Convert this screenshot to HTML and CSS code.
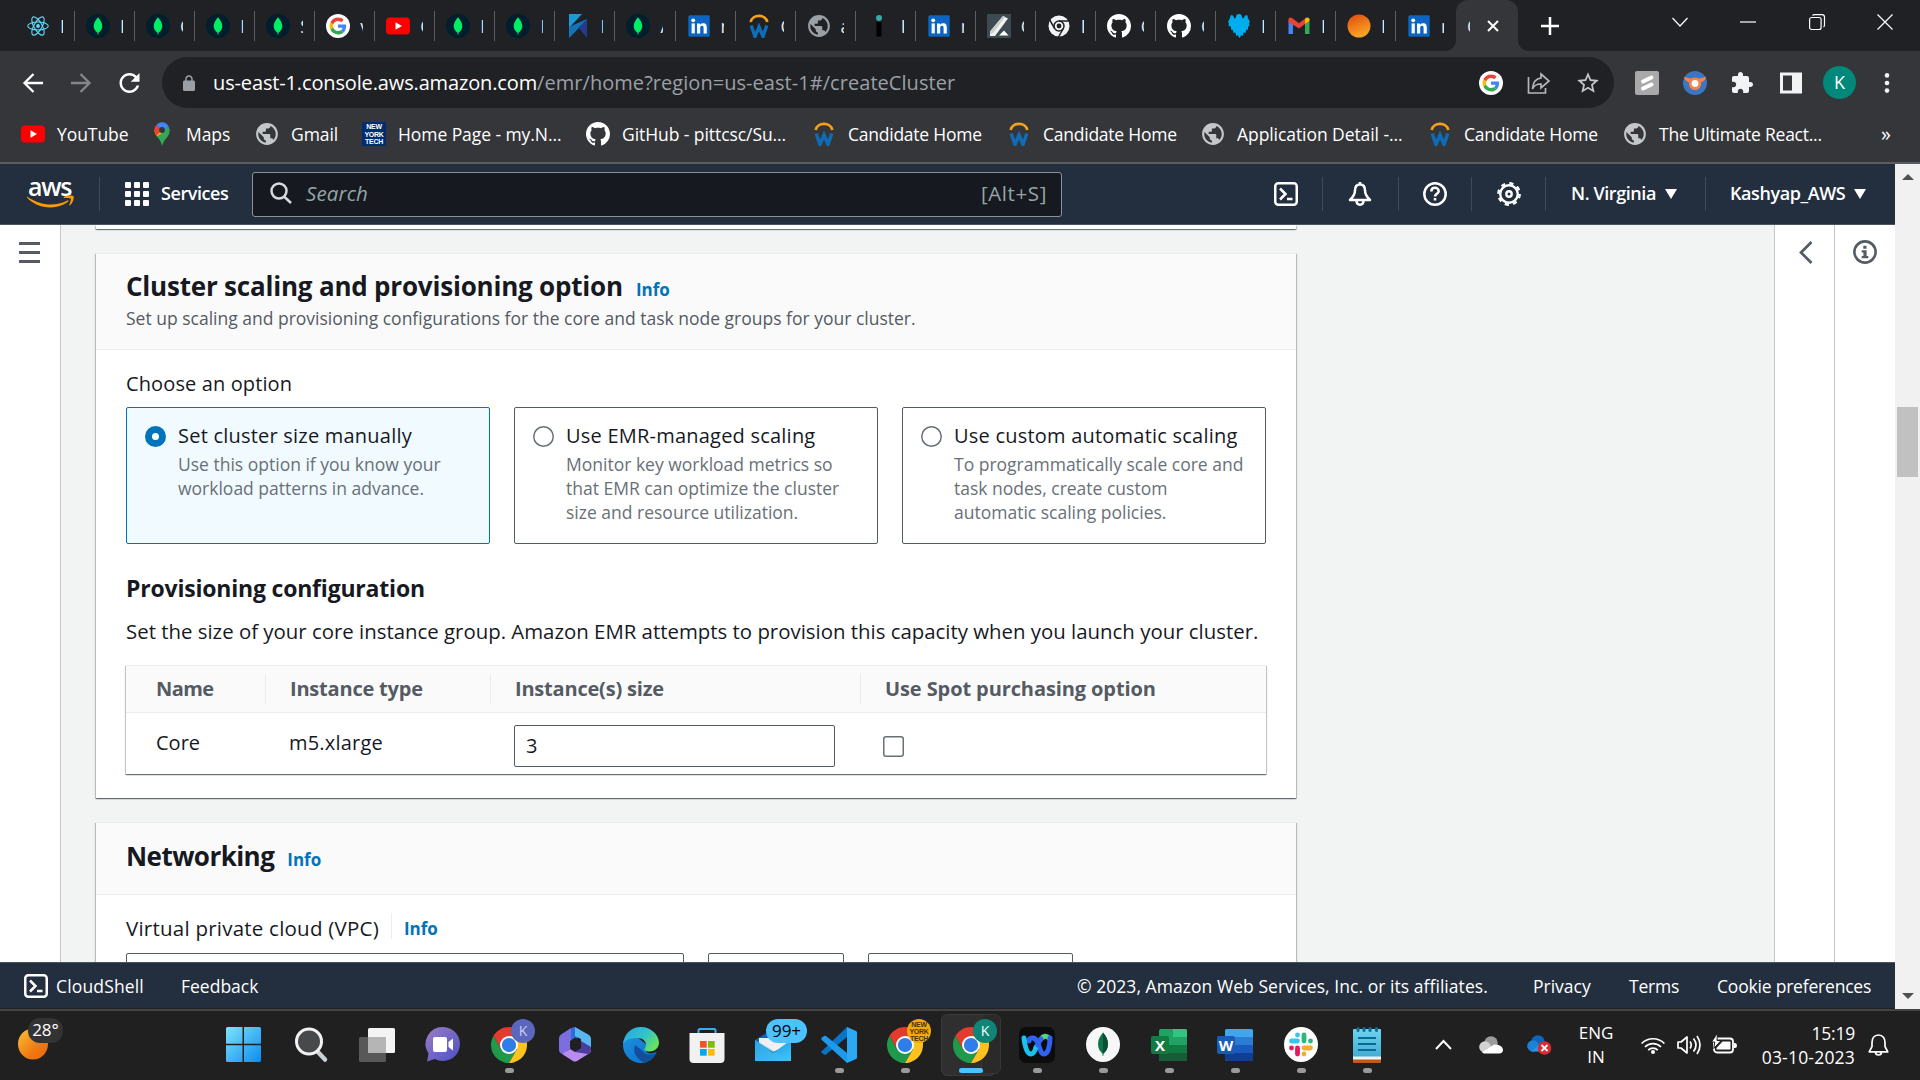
FILE: index.html
```html
<!DOCTYPE html>
<html lang="en">
<head>
<meta charset="utf-8">
<title>Create cluster</title>
<link rel="stylesheet" href="styles.css">
</head>
<body>
<svg class="defs" width="0" height="0">
  <defs>
    <linearGradient id="gSun" x1="0" y1="0" x2="1" y2="1"><stop offset="0" stop-color="#f6c33a"/><stop offset=".6" stop-color="#f27a12"/><stop offset="1" stop-color="#e9660a"/></linearGradient>
    <linearGradient id="gOrange" x1="0" y1="0" x2=".4" y2="1"><stop offset="0" stop-color="#e0480c"/><stop offset="1" stop-color="#f9a426"/></linearGradient>
    <linearGradient id="gWin" x1="0" y1="0" x2="1" y2="1"><stop offset="0" stop-color="#7fe3fb"/><stop offset="1" stop-color="#0a8cf0"/></linearGradient>
    <linearGradient id="gChat" x1="0" y1="0" x2="1" y2="1"><stop offset="0" stop-color="#9a7fc0"/><stop offset="1" stop-color="#4b4fc8"/></linearGradient>
    <linearGradient id="gEdge" x1="0" y1="0" x2="1" y2=".6"><stop offset="0" stop-color="#2ba3e8"/><stop offset=".6" stop-color="#33c3c9"/><stop offset="1" stop-color="#67e35b"/></linearGradient>
    <linearGradient id="gEdge2" x1="0" y1="0" x2="1" y2="1"><stop offset="0" stop-color="#1b8fe0"/><stop offset="1" stop-color="#0c70c8"/></linearGradient>
    <linearGradient id="gMail" x1="0" y1="0" x2="1" y2="1"><stop offset="0" stop-color="#1b8be0"/><stop offset="1" stop-color="#3fc8fa"/></linearGradient>
    <linearGradient id="gNote" x1="0" y1="0" x2="0" y2="1"><stop offset="0" stop-color="#6fd3f0"/><stop offset="1" stop-color="#3ba6cc"/></linearGradient>
    <symbol id="mongo" viewBox="0 0 24 24"><circle cx="12" cy="12" r="12" fill="#001e2b"/><path fill="#00ed64" d="M12 3.200c2.600 3 4.300 5.800 4.300 9 0 3-1.700 5-3.800 6.600l-.2 1.900h-.6l-.2-1.900c-2.100-1.600-3.800-3.600-3.800-6.600 0-3.200 1.700-6 4.300-9z"/></symbol>
    <symbol id="google" viewBox="-10 -10 68 68"><circle cx="24" cy="24" r="34" fill="#fff"/><path fill="#EA4335" d="M24 9.500c3.540 0 6.710 1.220 9.210 3.600l6.850-6.850C35.900 2.380 30.470 0 24 0 14.620 0 6.510 5.380 2.560 13.220l7.980 6.190C12.430 13.720 17.740 9.500 24 9.500z"/><path fill="#4285F4" d="M46.980 24.550c0-1.570-.15-3.090-.38-4.550H24v9.020h12.940c-.58 2.960-2.260 5.480-4.780 7.180l7.730 6c4.510-4.180 7.090-10.360 7.090-17.650z"/><path fill="#FBBC05" d="M10.530 28.590c-.48-1.450-.76-2.990-.76-4.590s.27-3.140.76-4.590l-7.980-6.190C.92 16.460 0 20.120 0 24c0 3.880.92 7.540 2.560 10.780l7.970-6.190z"/><path fill="#34A853" d="M24 48c6.480 0 11.930-2.130 15.890-5.810l-7.730-6c-2.150 1.450-4.920 2.300-8.160 2.300-6.260 0-11.570-4.220-13.470-9.910l-7.980 6.190C6.510 42.620 14.620 48 24 48z"/></symbol>
    <symbol id="youtube" viewBox="0 0 24 24"><rect y="3.500" width="24" height="17" rx="4" fill="#f00"/><path fill="#fff" d="M9.500 8.300l6.500 3.700-6.500 3.700z"/></symbol>
    <symbol id="linkedin" viewBox="0 0 24 24"><rect x="1.300" y="1.300" width="21.400" height="21.400" rx="1.500" fill="#0a66c2"/><g fill="#fff"><circle cx="6.200" cy="6.300" r="1.900"/><rect x="4.600" y="9.400" width="3.200" height="10"/><path d="M10 9.400h3v1.400c.5-.9 1.600-1.600 3.100-1.600 3 0 3.700 1.900 3.700 4.600v5.600h-3.200v-5c0-1.200-.1-2.600-1.600-2.600-1.600 0-1.800 1.200-1.800 2.500v5.100H10z"/></g></symbol>
    <symbol id="workday" viewBox="0 0 24 24"><path fill="none" stroke="#f5a11c" stroke-width="2.700" d="M3.700 8a8.400 7.200 0 0 1 16.600 0"/><path fill="none" stroke="#0f6db8" stroke-width="3.400" d="M4.200 11.500L8 22.500l4-9.500 4 9.500 3.800-11"/></symbol>
    <symbol id="globe" viewBox="1 1 22 22"><path fill="currentColor" d="M12 2C6.480 2 2 6.480 2 12s4.480 10 10 10 10-4.480 10-10S17.520 2 12 2zm-1 17.930c-3.950-.49-7-3.850-7-7.930 0-.62.08-1.210.21-1.790L9 15v1c0 1.100.9 2 2 2v1.930zm6.900-2.540c-.26-.81-1-1.390-1.900-1.390h-1v-3c0-.55-.45-1-1-1H8v-2h2c.55 0 1-.45 1-1V7h2c1.100 0 2-.9 2-2v-.41c2.930 1.190 5 4.060 5 7.410 0 2.080-.8 3.970-2.100 5.390z"/></symbol>
    <symbol id="github" viewBox="0 0 16 16"><path fill="#fff" d="M8 0C3.580 0 0 3.580 0 8c0 3.540 2.290 6.530 5.470 7.590.4.070.55-.17.55-.38 0-.19-.01-.82-.01-1.490-2.010.37-2.530-.49-2.690-.94-.09-.23-.48-.94-.82-1.130-.28-.15-.68-.52-.01-.53.63-.01 1.080.58 1.230.82.72 1.210 1.870.87 2.330.66.070-.52.28-.87.51-1.070-1.780-.2-3.640-.89-3.640-3.950 0-.87.31-1.590.82-2.150-.08-.2-.36-1.020.08-2.120 0 0 .67-.21 2.200.82.64-.18 1.320-.27 2-.27s1.360.09 2 .27c1.530-1.040 2.200-.82 2.200-.82.44 1.100.16 1.920.08 2.120.51.560.82 1.270.82 2.150 0 3.070-1.870 3.750-3.650 3.950.29.25.54.73.54 1.480 0 1.070-.01 1.930-.01 2.200 0 .21.15.46.55.38A8.010 8.010 0 0 0 16 8c0-4.420-3.580-8-8-8z"/></symbol>
    <symbol id="chrome" viewBox="0 0 48 48"><path fill="#e33b2e" d="M24 12h20.780A24 24 0 0 0 3.220 12l10.390 18z"/><path fill="#1e9a4a" d="M34.390 30 24 48A24 24 0 0 1 3.220 12l10.390 18z"/><path fill="#fcc31e" d="M34.390 30 24 48A24 24 0 0 0 44.780 12H24z"/><circle cx="24" cy="24" r="12" fill="#fff"/><circle cx="24" cy="24" r="9.500" fill="#2f7de9"/></symbol>
    <symbol id="shell" viewBox="0 0 24 24"><g fill="none" stroke="#fff" stroke-width="2.500"><rect x="1.250" y="1.250" width="21.500" height="21.500" rx="3"/><path d="M6 6.500l5.500 5.500L6 17.500M13 17h5.500"/></g></symbol>
  </defs>
</svg>

<div class="tabstrip">
  <div class="tab"><svg class="fav" viewBox="0 0 24 24"><g fill="none" stroke="#61dafb" stroke-width="1.100"><ellipse cx="12" cy="12" rx="10.300" ry="4"/><ellipse cx="12" cy="12" rx="10.300" ry="4" transform="rotate(60 12 12)"/><ellipse cx="12" cy="12" rx="10.300" ry="4" transform="rotate(120 12 12)"/></g><circle cx="12" cy="12" r="1.900" fill="#61dafb"/></svg><span class="tt">R</span></div>
  <div class="tab"><svg class="fav"><use href="#mongo"/></svg><span class="tt">D</span></div>
  <div class="tab"><svg class="fav"><use href="#mongo"/></svg><span class="tt">C</span></div>
  <div class="tab"><svg class="fav"><use href="#mongo"/></svg><span class="tt">D</span></div>
  <div class="tab"><svg class="fav"><use href="#mongo"/></svg><span class="tt">S</span></div>
  <div class="tab"><svg class="fav"><use href="#google"/></svg><span class="tt">v</span></div>
  <div class="tab"><svg class="fav"><use href="#youtube"/></svg><span class="tt">C</span></div>
  <div class="tab"><svg class="fav"><use href="#mongo"/></svg><span class="tt">D</span></div>
  <div class="tab"><svg class="fav"><use href="#mongo"/></svg><span class="tt">D</span></div>
  <div class="tab"><svg class="fav" viewBox="0 0 24 24"><path fill="#1a9ad6" d="M3 0h13L3 14z"/><path fill="#1273b8" d="M3 24V14L21 5v1L12 15z"/><path fill="#243a8c" d="M12 13l9-8v19z"/><path fill="#1273b8" d="M3 24l9-10 9-9L3 13z"/></svg><span class="tt">K</span></div>
  <div class="tab"><svg class="fav"><use href="#mongo"/></svg><span class="tt">A</span></div>
  <div class="tab"><svg class="fav"><use href="#linkedin"/></svg><span class="tt">n</span></div>
  <div class="tab"><svg class="fav"><use href="#workday"/></svg><span class="tt">C</span></div>
  <div class="tab"><svg class="fav grey"><use href="#globe"/></svg><span class="tt">a</span></div>
  <div class="tab"><svg class="fav" viewBox="0 0 24 24"><circle cx="12" cy="4" r="3" fill="#3aa9a9"/><rect x="9.500" y="8" width="5" height="14.500" fill="#000"/></svg><span class="tt">I</span></div>
  <div class="tab"><svg class="fav"><use href="#linkedin"/></svg><span class="tt">n</span></div>
  <div class="tab"><svg class="fav" viewBox="0 0 24 24"><rect width="24" height="24" fill="#3c4a52"/><path fill="#f2f2f2" d="M16 2l5 2.500L8 22H3v-4.500z"/><path fill="#ccc" d="M16 2l2 1L6 19l-3 1v-2.500z"/><path fill="#fff" d="M12 21.500l5-5 4.500 5z"/></svg><span class="tt">C</span></div>
  <div class="tab"><svg class="fav" viewBox="0 0 24 24"><circle cx="12" cy="12" r="10.500" fill="#f1f3f4"/><g fill="none" stroke="#202124" stroke-width="1.500"><circle cx="12" cy="12" r="5"/><path d="M12 7h10M7.700 14.500L2.700 6M16.300 14.500L11.500 23"/></g><circle cx="12" cy="12" r="2.400" fill="#202124"/></svg><span class="tt">D</span></div>
  <div class="tab"><svg class="fav"><use href="#github"/></svg><span class="tt">C</span></div>
  <div class="tab"><svg class="fav"><use href="#github"/></svg><span class="tt">C</span></div>
  <div class="tab"><svg class="fav" viewBox="0 0 24 24"><path fill="#00aeef" d="M12 0c1.800 0 3 1 3 3l1 1.500c1 0 1-2.500 3-3.500l2 1-.5 1L23 8l-1 1 .5 3-1.500.5v3l-1.800.5-.7 3-2-.5-.5 3.500-1.500-1-2 3-2-3-1.500 1-.5-3.500-2 .5-.7-3-1.800-.5v-3L1.500 12 2 9 1 8l2.500-5L3 2l2-1c2 1 2 3.500 3 3.500L9 3c0-2 1.200-3 3-3z"/></svg><span class="tt">I</span></div>
  <div class="tab"><svg class="fav" viewBox="0 0 24 24"><path fill="#4285f4" d="M1.500 20V6.500l4.500 3.400V20z"/><path fill="#34a853" d="M18 20V9.900l4.500-3.400V20z"/><path fill="#ea4335" d="M1.500 8V5.500c0-2 2-2.700 3.500-1.600l7 5.300 7-5.300-1 6-6 4.500z"/><path fill="#fbbc04" d="M18 9.900V4.700l1-.8c1.500-1.100 3.500-.4 3.500 1.600V7z"/></svg><span class="tt">I</span></div>
  <div class="tab"><svg class="fav" viewBox="0 0 24 24"><circle cx="12" cy="12" r="11.500" fill="url(#gOrange)"/></svg><span class="tt">I</span></div>
  <div class="tab last"><svg class="fav"><use href="#linkedin"/></svg><span class="tt">n</span></div>
  <div class="tab active"><span class="tt">C</span><svg width="12" height="12" viewBox="0 0 12 12"><path stroke="#fff" stroke-width="2" d="M1 1l10 10M11 1L1 11"/></svg></div>
  <svg class="plus" width="18" height="18" viewBox="0 0 18 18"><path stroke="#fff" stroke-width="2.500" d="M9 0v18M0 9h18"/></svg>
  <div class="winctl">
    <svg width="16" height="16" viewBox="0 0 16 16"><path d="M.5 4l7.500 8 7.500-8"/></svg>
    <svg width="16" height="16" viewBox="0 0 16 16"><path d="M0 8h16"/></svg>
    <svg width="16" height="16" viewBox="0 0 16 16"><rect x=".6" y="3.500" width="11.500" height="12" rx="2"/><path d="M3.500 1.500Q4 .6 5.500 .6H13q2.500 0 2.500 2.500V11q0 1.500-1 2"/></svg>
    <svg width="16" height="16" viewBox="0 0 16 16"><path d="M.5.5l15 15M15.500.5l-15 15"/></svg>
  </div>
</div>

<div class="toolbar">
  <svg class="ti back" viewBox="0 0 20 20"><path fill="none" stroke="#fff" stroke-width="2.300" d="M20 10H2M10.500 1L1.500 10l9 9"/></svg>
  <svg class="ti fwd" viewBox="0 0 20 20"><path fill="none" stroke="#85868a" stroke-width="2.300" d="M0 10h18M9.500 1l9 9-9 9"/></svg>
  <svg class="ti reload" viewBox="4 4 16 16"><path fill="#fff" d="M17.650 6.350C16.200 4.900 14.210 4 12 4c-4.420 0-7.990 3.580-7.990 8s3.570 8 7.990 8c3.730 0 6.840-2.550 7.730-6h-2.080c-.82 2.330-3.040 4-5.650 4-3.310 0-6-2.690-6-6s2.690-6 6-6c1.660 0 3.140.69 4.220 1.780L13 11h7V4l-2.350 2.350z"/></svg>
  <div class="omnibox">
    <svg class="lock" viewBox="4 1 16 21"><path fill="#9aa0a6" d="M18 8h-1V6c0-2.760-2.240-5-5-5S7 3.240 7 6v2H6c-1.100 0-2 .9-2 2v10c0 1.100.9 2 2 2h12c1.100 0 2-.9 2-2V10c0-1.100-.9-2-2-2zM9 6c0-1.660 1.340-3 3-3s3 1.340 3 3v2H9V6z"/></svg>
    <span class="host">us-east-1.console.aws.amazon.com</span><span class="path">/emr/home?region=us-east-1#/createCluster</span>
    <div class="omni-r">
      <svg width="24" height="24"><use href="#google"/></svg>
      <svg width="24" height="24" viewBox="0 0 24 24"><path fill="none" stroke="#b4b6b9" stroke-width="1.700" d="M1.500 6v16h17v-5M14 3l8 7-8 7v-4c-4 0-7 1-8.500 5C6 11 9 7.500 14 7z"/></svg>
      <svg width="26" height="26" viewBox="0 0 24 24"><path fill="#c4c7ca" d="M22 9.240l-7.190-.62L12 2 9.190 8.630 2 9.240l5.460 4.730L5.820 21 12 17.270 18.180 21l-1.630-7.030L22 9.240zM12 15.400l-3.760 2.270 1-4.280-3.320-2.880 4.380-.38L12 6.100l1.710 4.040 4.380.38-3.320 2.880 1 4.280L12 15.400z"/></svg>
    </div>
  </div>
  <div class="exts">
    <svg width="24" height="24" viewBox="0 0 24 24"><rect width="24" height="24" rx="2" fill="#a9a9a9"/><path stroke="#fff" stroke-width="4" stroke-linecap="round" d="M8 10.500l8.500-4M8 17.500l8.500-4"/></svg>
    <svg width="24" height="24" viewBox="0 0 24 24"><circle cx="12" cy="12" r="12" fill="#3a76c4"/><path fill="#f58345" d="M1 6l7 1.500q4-2 8 0L23 6q0 3-5 5.500a6.200 6.200 0 1 1-12 0Q1 9 1 6z"/><circle cx="12" cy="12.500" r="3.400" fill="#fff"/></svg>
    <svg width="24" height="24" viewBox="1 0 24 24"><path fill="#f1f3f4" d="M20.500 11H19V7c0-1.100-.9-2-2-2h-4V3.500C13 2.120 11.880 1 10.500 1S8 2.120 8 3.500V5H4c-1.100 0-1.990.9-1.990 2v3.800H3.500c1.490 0 2.700 1.210 2.700 2.700s-1.210 2.700-2.700 2.700H2V20c0 1.100.9 2 2 2h3.800v-1.500c0-1.490 1.210-2.700 2.700-2.700 1.490 0 2.700 1.210 2.700 2.700V22H17c1.100 0 2-.9 2-2v-4h1.500c1.380 0 2.500-1.120 2.500-2.500S21.880 11 20.500 11z"/></svg>
    <svg width="24" height="24" viewBox="0 0 24 24"><path fill="#f1f3f4" fill-rule="evenodd" d="M1 1.500h22v21H1zM4 4.500v15h9v-15z"/></svg>
    <span class="avatar">K</span>
    <svg class="dots" width="6" height="20" viewBox="0 0 6 20"><g fill="#f1f3f4"><circle cx="3" cy="2.400" r="2.300"/><circle cx="3" cy="10" r="2.300"/><circle cx="3" cy="17.600" r="2.300"/></g></svg>
  </div>
</div>

<div class="bookmarks">
  <div class="bm"><svg class="fav"><use href="#youtube"/></svg><span>YouTube</span></div>
  <div class="bm"><svg class="fav" viewBox="0 0 24 24"><path fill="#34a853" d="M12 24c-1-5-3-7-5-9.500L18.500 4.500C21 9 19 13 16.500 16 14 19 13 21 12 24z"/><path fill="#fbbc04" d="M7 14.500C5.500 12.500 4.500 10.500 4.300 8l7.200-1.500 2.500 3z"/><path fill="#ea4335" d="M4.300 8.500c0-2 .7-4 2-5.300L12 8l-5.500 6z"/><path fill="#4285f4" d="M6.300 3.200C9-.6 16-1 18.500 4.500L13 11 9.500 6z"/><circle cx="12" cy="8" r="2.900" fill="#35363a"/></svg><span>Maps</span></div>
  <div class="bm"><svg class="fav lite"><use href="#globe"/></svg><span>Gmail</span></div>
  <div class="bm"><span class="nyt">NEW<br>YORK<br>TECH</span><span>Home Page - my.N...</span></div>
  <div class="bm"><svg class="fav"><use href="#github"/></svg><span>GitHub - pittcsc/Su...</span></div>
  <div class="bm tight"><svg class="fav"><use href="#workday"/></svg><span>Candidate Home</span></div>
  <div class="bm tight"><svg class="fav"><use href="#workday"/></svg><span>Candidate Home</span></div>
  <div class="bm"><svg class="fav lite"><use href="#globe"/></svg><span>Application Detail -...</span></div>
  <div class="bm tight"><svg class="fav"><use href="#workday"/></svg><span>Candidate Home</span></div>
  <div class="bm tight"><svg class="fav lite"><use href="#globe"/></svg><span>The Ultimate React...</span></div>
  <div class="bm more"><span>»</span></div>
</div>

<div class="viewport">
  <div class="site">
    <header class="awsnav">
      <div class="logo"><span>aws</span><svg viewBox="0 0 47 13" width="47" height="13"><path fill="#f90" d="M0 1.500C8 7 16 9.500 23.500 9.500c6 0 12-1.500 17-4 1-.5 1.500.5.500 1.300C36 10.500 30 12.500 23.500 12.500 14 12.500 5 8.500 0 2.500c-.3-.5 0-1.200.6-.8zM37 2c2.500-1.800 8.500-1.800 9.500-.8.800 1.300-.5 7-3.500 9-.6.400-1 .1-.7-.6 1-2.200 2-5 1.500-6-.6-.8-4-.8-6.200-.6-.8 0-1.200-.5-.6-1z"/></svg></div>
      <i class="vl"></i>
      <svg class="grid9" viewBox="0 0 24 24"><g fill="#fff"><rect width="6" height="6" rx="1"/><rect x="9" width="6" height="6" rx="1"/><rect x="18" width="6" height="6" rx="1"/><rect y="9" width="6" height="6" rx="1"/><rect x="9" y="9" width="6" height="6" rx="1"/><rect x="18" y="9" width="6" height="6" rx="1"/><rect y="18" width="6" height="6" rx="1"/><rect x="9" y="18" width="6" height="6" rx="1"/><rect x="18" y="18" width="6" height="6" rx="1"/></g></svg>
      <span class="navt">Services</span>
      <div class="search"><svg width="22" height="22" viewBox="0 0 22 22"><g fill="none" stroke="#d5dbdb" stroke-width="2.500"><circle cx="9" cy="9" r="7.500"/><path d="M14 14.500l7 6.500"/></g></svg><em>Search</em><span>[Alt+S]</span></div>
      <div class="navicons">
        <div class="ni n1"><svg width="24" height="24"><use href="#shell"/></svg></div>
        <div class="ni n2"><svg width="24" height="24" viewBox="0 0 24 24"><g fill="none" stroke="#fff" stroke-width="2.500" stroke-linejoin="round"><path d="M12 2.500c-3.800 0-5 3-5 6 0 4-2 6.500-5 9.500h20c-3-3-5-5.500-5-9.500 0-3-1.200-6-5-6zM12 0v3M8.500 18.500q0 4.200 3.500 4.200t3.500-4.200"/></g></svg></div>
        <div class="ni n3"><svg width="24" height="24" viewBox="0 0 24 24"><g fill="none" stroke="#fff" stroke-width="2.500"><circle cx="12" cy="12" r="10.700"/><path d="M8.300 9.500c0-5 7.400-4.700 7.400-.3 0 2.500-3.700 2.600-3.700 5.300M12 16v2.500"/></g></svg></div>
        <div class="ni n4"><svg width="24" height="24" viewBox="0 0 24 24"><g fill="none" stroke="#fff"><circle cx="12" cy="12" r="8.800" stroke-width="2.400"/><circle cx="12" cy="12" r="10.700" stroke-width="2.400" stroke-dasharray="4.200 4.200"/><circle cx="12" cy="12" r="2.700" stroke-width="2.400"/></g></svg></div>
        <div class="ni n5"><span class="navt">N. Virginia</span><i class="tri"></i></div>
        <div class="ni n6"><span class="navt">Kashyap_AWS</span><i class="tri"></i></div>
      </div>
    </header>

    <div class="main">
      <aside class="left"><i></i><i></i><i></i></aside>
      <main class="content">
        <section class="card prev"></section>
        <section class="card scaling">
          <div class="chead">
            <h2><span>Cluster scaling and provisioning option</span><a>Info</a></h2>
            <p>Set up scaling and provisioning configurations for the core and task node groups for your cluster.</p>
          </div>
          <div class="cbody">
            <div class="label">Choose an option</div>
            <div class="tiles">
              <div class="tile sel"><i class="radio"></i><div><h4>Set cluster size manually</h4><p>Use this option if you know your<br>workload patterns in advance.</p></div></div>
              <div class="tile"><i class="radio"></i><div><h4>Use EMR-managed scaling</h4><p>Monitor key workload metrics so<br>that EMR can optimize the cluster<br>size and resource utilization.</p></div></div>
              <div class="tile"><i class="radio"></i><div><h4>Use custom automatic scaling</h4><p>To programmatically scale core and<br>task nodes, create custom<br>automatic scaling policies.</p></div></div>
            </div>
            <h3>Provisioning configuration</h3>
            <p class="lead">Set the size of your core instance group. Amazon EMR attempts to provision this capacity when you launch your cluster.</p>
            <div class="table">
              <div class="tr th"><div>Name</div><div>Instance type</div><div>Instance(s) size</div><div>Use Spot purchasing option</div></div>
              <div class="tr td"><div>Core</div><div>m5.xlarge</div><div><span class="input">3</span></div><div><i class="check"></i></div></div>
            </div>
          </div>
        </section>
        <section class="card net">
          <div class="chead"><h2><span>Networking</span><a>Info</a></h2></div>
          <div class="cbody">
            <div class="vpc"><span>Virtual private cloud (VPC)</span><a>Info</a></div>
            <div class="controls"><i class="c1"></i><i class="c2"></i><i class="c3"><svg width="22" height="14" viewBox="0 0 22 14"><path fill="none" stroke="#879596" stroke-width="2.500" d="M9 1.300H1.300V14M12 1.300h8.700V9"/></svg></i></div>
          </div>
        </section>
      </main>
      <aside class="right r1"><svg width="14" height="23" viewBox="0 0 14 23"><path fill="none" stroke="#545b64" stroke-width="2.700" d="M12.500 1L2 11.500 12.500 22"/></svg></aside>
      <aside class="right r2"><svg width="24" height="24" viewBox="0 0 24 24"><circle cx="12" cy="12" r="10.600" fill="none" stroke="#545b64" stroke-width="2.600"/><path fill="#545b64" d="M10.300 5.800h3.200v2.900h-3.200zM8.700 10.300h4.900v5.600h1.700v2.300H8.700v-2.300h1.700v-3.300H8.700z"/></svg></aside>
    </div>

    <footer class="awsfoot">
      <svg width="24" height="24"><use href="#shell"/></svg>
      <span class="f1">CloudShell</span><span class="f2">Feedback</span>
      <span class="f3">© 2023, Amazon Web Services, Inc. or its affiliates.</span><span class="f4">Privacy</span><span class="f5">Terms</span><span class="f6">Cookie preferences</span>
    </footer>
  </div>
  <div class="scrollbar"><i class="up"></i><i class="thumb"></i><i class="down"></i></div>
</div>

<div class="taskbar">
  <div class="weather"><svg width="30" height="32" viewBox="0 0 30 32"><ellipse cx="15" cy="16" rx="15" ry="15.500" fill="url(#gSun)"/></svg><span class="deg">28°</span></div>
  <div class="apps">
    <div class="app start"><svg width="35" height="35" viewBox="0 0 35 35"><path fill="url(#gWin)" d="M0 1.500Q0 0 1.500 0h15v16.800H0zM18 0h15.500Q35 0 35 1.500v15.300H18zM0 18.200h16.500V35h-15Q0 35 0 33.500zM18 18.200h17v15.300q0 1.500-1.500 1.500H18z"/></svg></div>
    <div class="app"><svg width="34" height="35" viewBox="0 0 34 35"><path stroke="#c9d0d6" stroke-width="4.500" stroke-linecap="round" d="M23 24l8 8.500"/><circle cx="15" cy="14.500" r="12.500" fill="#48494b" stroke="#f1f2f3" stroke-width="3"/></svg></div>
    <div class="app"><svg width="36" height="34" viewBox="0 0 36 34"><rect x="9" width="27" height="25" rx="1.500" fill="#f4f4f4"/><rect y="9" width="27" height="25" rx="1.500" fill="#5e5e5e" opacity=".9"/><path fill="#b5b5b5" d="M9 9h18v16H9z"/></svg></div>
    <div class="app"><svg width="34" height="35" viewBox="0 0 34 35"><path fill="url(#gChat)" d="M17 0a17 17 0 1 1-8 32L1 34.500l1.500-8A17 17 0 0 1 17 0z"/><rect x="7" y="10" width="14" height="15" rx="2" fill="#fff"/><path fill="#fff" d="M22.500 15l4.500-3.500v12L22.500 20z"/></svg></div>
    <div class="app run"><svg width="36" height="36"><use href="#chrome"/></svg><b class="bdg k">K</b></div>
    <div class="app"><svg width="32" height="35" viewBox="0 0 32 35"><path fill="#2b6fd6" d="M11 2q3-2 5-2l5 3-1 7-5 3-4 4z"/><path fill="#58b7f0" d="M16 0l14 8q2 1.500 2 3.500v9l-10-5.500V12l-6-3z"/><path fill="#7b6fe0" d="M12 1v20l-8 6q-4-1-4-4V11q0-2 2-3.500z"/><path fill="#b98af0" d="M3 27l8-5 5 3 9-4q7-1 7 2 0 2-2 3.500l-12 7.500q-2 1-4 0z"/><path fill="#4b3c9e" d="M22 14l10 6v3q-1 3-3 4l-13-2 6-4z"/><path fill="#202020" d="M11 14l5-3.500 6 3.500v6.500L16 24l-5-3z"/></svg></div>
    <div class="app"><svg width="36" height="36" viewBox="0 0 36 36"><path fill="url(#gEdge2)" d="M0 18C0 9 8 9 14 10l10 8c-3 3-2 8 3 8.500 3 0 6-1.500 6.500-1.500C31 31 26 36 18 36 8 36 0 28 0 18z"/><path fill="#134e9c" d="M12 18c-3 8 3 15 9 17.500 6-.8 10-4.500 12.500-9.500-5 3-12 2-15-3z"/><path fill="url(#gEdge)" d="M0 17C1 7 8 0 18 0s18 8 18 15.500c0 6-5 9-9.500 9-4 0-6-1.500-4.500-3.500 3-5-1-10-8-10C8 11 2 13 0 17z"/></svg></div>
    <div class="app"><svg width="36" height="36" viewBox="0 0 36 36"><path fill="none" stroke="#31b0f2" stroke-width="2" d="M9.500 9V3.500Q9.500 2 11 2h14q1.500 0 1.500 1.500V9"/><path fill="#f1f1f1" d="M.5 6h35v26q0 4-4 4h-27q-4 0-4-4z"/><path fill="#f35325" d="M11 14h6.700v6.700H11z"/><path fill="#81bc06" d="M19 14h6.700v6.700H19z"/><path fill="#05a6f0" d="M11 22h6.700v6.700H11z"/><path fill="#ffba08" d="M19 22h6.700v6.700H19z"/></svg></div>
    <div class="app"><svg width="36" height="36" viewBox="0 0 36 36"><path fill="#0d63b8" d="M0 13L18 2l18 11v10H0z"/><path fill="#f0f0f0" d="M4 11h28v8L18 25 4 16z"/><path fill="url(#gMail)" d="M0 13l18 13 18-13v21H0z"/><path fill="#43bdf0" d="M0 13l36 21H0z" opacity=".5"/></svg><b class="bdg n99">99+</b></div>
    <div class="app run"><svg width="36" height="36" viewBox="0 0 36 36"><path fill="#0a74c4" d="M26 0L2 23q-3 1.500-1 3l2 1.500q1 .5 2 0L26 10z"/><path fill="#1d9bea" d="M26 36L2 14q-3-2-1-3.500L3 9q1-.5 2 0l21 17z"/><path fill="#2aa9f4" d="M26 0l9 4q1 .5 1 1.500v25q0 1-1 1.500l-9 4z"/></svg></div>
    <div class="app run"><svg width="36" height="36"><use href="#chrome"/></svg><b class="bdg ny">NEW<br>YORK<br>TECH</b></div>
    <div class="app act"><i class="stack"></i><svg width="36" height="36"><use href="#chrome"/></svg><b class="bdg kg">K</b></div>
    <div class="app run"><svg width="36" height="36" viewBox="0 0 36 36"><rect width="36" height="36" rx="7" fill="#0c0c0d"/><g fill="none" stroke-width="5" stroke-linecap="round"><path stroke="#57d47a" d="M22 12q4-5 8-1"/><path stroke="#2f62f0" d="M31 11c0 8-2 16-6 16-5 0-5-16-11-16-3 0-4 1-4 3"/><path stroke="#19c3f0" d="M5 11c1 9 3 16 7 16 3 0 4-3 5-7"/><path stroke="#2f62f0" d="M19 18q1-4 3-6"/></g></svg></div>
    <div class="app run"><svg width="34" height="35" viewBox="0 0 34 35"><ellipse cx="17" cy="17.500" rx="17" ry="17.500" fill="#f7f7f7"/><path fill="#10734b" d="M17 5.500c3 3.500 5 7 5 11.500s-2 7.500-4.500 9.500l-.2 2.500h-.7l-.2-2.500c-2.400-2-4.400-5-4.400-9.500S14 9 17 5.500z"/><path fill="#0a4f34" d="M17 5.500c3 3.500 5 7 5 11.500s-2 7.500-5 10z"/></svg></div>
    <div class="app run"><svg width="36" height="32" viewBox="0 0 36 32"><rect x="8" width="28" height="32" rx="2" fill="#21a366"/><path fill="#33c481" d="M22 0h12q2 0 2 2v6H22z"/><path fill="#107c41" d="M8 16h14v8H8zM22 16h14v8H22z"/><path fill="#185c37" d="M8 24h28v6q0 2-2 2H10q-2 0-2-2z"/><rect y="7" width="18" height="18" rx="2" fill="#107c41"/><text x="9" y="21.500" text-anchor="middle" class="ms">X</text></svg></div>
    <div class="app run"><svg width="36" height="32" viewBox="0 0 36 32"><rect x="8" width="28" height="32" rx="2" fill="#2b7cd3"/><path fill="#41a5ee" d="M8 8V2q0-2 2-2h24q2 0 2 2v6z"/><path fill="#185abd" d="M8 16h28v8H8z"/><path fill="#103f91" d="M8 24h28v6q0 2-2 2H10q-2 0-2-2z"/><rect y="7" width="18" height="18" rx="2" fill="#185abd"/><text x="9" y="21.500" text-anchor="middle" class="ms">W</text></svg></div>
    <div class="app run"><svg width="34" height="35" viewBox="0 0 34 35"><ellipse cx="17" cy="17.500" rx="17" ry="17.500" fill="#fff"/><g stroke-width="4.800" stroke-linecap="round"><path stroke="#36c5f0" d="M13.500 8v0M7.500 14h6"/><path stroke="#2eb67d" d="M20 8v6M26.500 14v0"/><path stroke="#ecb22e" d="M20 21h6.500M20 27v0"/><path stroke="#e01e5a" d="M13.500 21v6M7.500 21v0"/></g></svg></div>
    <div class="app run"><svg width="28" height="36" viewBox="0 0 28 36"><rect y="2" width="28" height="33" rx="1" fill="url(#gNote)"/><path fill="#f2f2f2" d="M0 29.500h28V33H0z"/><path fill="#c25b12" d="M0 32.500h28V35q0 1-1 1H1q-1 0-1-1z"/><path stroke="#0f6f96" stroke-width="3" stroke-linecap="round" d="M5 1.500v2M11 1.500v2M17 1.500v2M23.500 1.500v2"/><path stroke="#0b6a94" stroke-width="2" d="M5 11h18M5 17h18M5 23h18"/></svg></div>
  </div>
  <div class="tray">
    <svg class="t1" width="17" height="11" viewBox="0 0 17 11"><path fill="none" stroke="#fff" stroke-width="2" d="M1 10l7.500-8L16 10"/></svg>
    <svg class="t2" width="24" height="18" viewBox="0 0 24 18"><circle cx="12" cy="7" r="6.800" fill="#9b9b9b"/><circle cx="6" cy="11" r="5.800" fill="#d2d2d2"/><path fill="#fff" d="M3 16.500L15 8.500q8 0 9 5 0 4-4 4H5z"/></svg>
    <svg class="t3" width="24" height="20" viewBox="0 0 24 20"><circle cx="11" cy="7" r="6.800" fill="#1264b8"/><circle cx="6" cy="11" r="5.800" fill="#1b80d8"/><path fill="#2a97ea" d="M4 16.500L14 8.500q6 0 8 5l-4 3z"/><circle cx="17.500" cy="13" r="6.800" fill="#d92b32"/><path stroke="#fff" stroke-width="1.800" d="M14.500 10l6 6M20.500 10l-6 6"/></svg>
    <div class="lang">ENG<br>IN</div>
    <svg class="t4" width="24" height="18" viewBox="0 0 24 18"><g fill="none" stroke="#fff" stroke-width="1.700"><path d="M.6 7.500a16 16 0 0 1 22.800 0M4 11a11.300 11.300 0 0 1 16 0M7.200 14.200a6.800 6.800 0 0 1 9.600 0"/></g><circle cx="12" cy="16" r="2" fill="#fff"/></svg>
    <svg class="t5" width="24" height="20" viewBox="0 0 24 20"><g fill="none" stroke="#fff" stroke-width="1.700" stroke-linejoin="round"><path d="M1 7h3l6-5v16l-6-5H1zM13 6.500q2.500 3.500 0 7M16.500 3.500q5 6.500 0 13M20 1q6 9 0 18"/></g></svg>
    <svg class="t6" width="25" height="20" viewBox="0 0 25 20"><rect x="2" y="3.500" width="19" height="14" rx="3" fill="none" stroke="#fff" stroke-width="1.800"/><path fill="#fff" d="M10.500 6.500h8v8H4.500V13zM22 8h1q2 0 2 2.500T23 13h-1z"/><path fill="#fff" stroke="#202020" d="M5.500-2L-.5 7h3.300l-1 6.500L9 5.500H5z"/></svg>
    <div class="clock">15:19<br><span>03-10-2023</span></div>
    <svg class="t7" width="21" height="22" viewBox="0 0 21 22"><path fill="none" stroke="#fff" stroke-width="1.700" stroke-linejoin="round" d="M10.500 1C6 1 4 4.500 4 8.500v4L1.200 17.800h18.600L17 12.500v-4C17 4.500 15 1 10.500 1zM7.500 18q0 3 3 3t3-3"/></svg>
  </div>
</div>
</body>
</html>
```
FILE: styles.css
```css
* { box-sizing: border-box; }
body { margin: 0; width: 1920px; height: 1080px; overflow: hidden; display: flex; flex-direction: column; font-family: "Open Sans", "Noto Sans", sans-serif; background: #202124; color: #16191f; }
svg { display: block; flex: none; overflow: visible; }
.defs { position: absolute; }
i { font-style: normal; }
h2, h3, h4, p { margin: 0; font-weight: 400; }

/* browser tabs */
.tabstrip { height: 51px; flex: none; background: #202124; display: flex; align-items: center; padding-left: 15px; color: #e8eaed; font-size: 18px; }
.tab { width: 60.050px; height: 30px; flex: none; display: flex; align-items: center; padding-left: 11px; border-right: 1px solid #5c5d60; }
.tab.last { border-right-color: transparent; width: 60px; }
.fav { width: 24px; height: 24px; }
.grey { color: #9aa0a6; }
.lite { color: #c4c7ca; }
.tt { width: 3px; margin-left: 10px; line-height: 24px; overflow: hidden; }
.tab.active { width: 62px; height: 51px; border: 0; padding-left: 11px; gap: 17px; background: #35363a; border-radius: 12px 12px 0 0; position: relative; }
.tab.active .tt { margin: 0; }
.tab.active::before, .tab.active::after { content: ""; position: absolute; bottom: 0; width: 10px; height: 10px; }
.tab.active::before { left: -10px; background: radial-gradient(circle at 0 0, transparent 9.500px, #35363a 10px); }
.tab.active::after { right: -10px; background: radial-gradient(circle at 100% 0, transparent 9.500px, #35363a 10px); }
.plus { margin-left: 23px; }
.winctl { margin-left: auto; margin-right: 27px; display: flex; gap: 52.500px; padding-bottom: 7px; }
.winctl path, .winctl rect { fill: none; stroke: #fff; stroke-width: 1.200; }

/* address bar */
.toolbar { height: 63px; flex: none; background: #35363a; display: flex; align-items: center; padding-left: 23px; }
.ti { width: 20px; height: 20px; }
.fwd { margin-left: 28px; }
.reload { width: 21px; margin-left: 28px; }
.omnibox { width: 1452px; height: 51px; margin-left: 22px; border-radius: 26px; background: #202124; display: flex; align-items: center; padding: 0 13px 0 21px; font-size: 20px; line-height: 51px; color: #fff; }
.lock { width: 12px; height: 16px; margin-right: 18px; }
.host { letter-spacing: -.14px; }
.path { color: #9aa0a6; letter-spacing: .05px; }
.omni-r { margin-left: auto; display: flex; align-items: center; gap: 24px; }
.exts { display: flex; align-items: center; gap: 24px; margin-left: 21px; }
.avatar { width: 33px; height: 33px; margin: 0 -3px 0 -4px; border-radius: 50%; background: #00897b; color: #fff; text-align: center; font-size: 18px; line-height: 33px; }
.dots { margin-left: 7px; }

.bookmarks { height: 50px; flex: none; background: #35363a; border-bottom: 2px solid #5c5d61; padding: 0 0 8px 21px; display: grid; grid-template-columns: 129px 105px 107px 224px 226px 195px 194px 227px 195px 246px auto; align-items: center; font-size: 17.500px; letter-spacing: -.07px; color: #fff; white-space: nowrap; }
.bm { display: flex; align-items: center; gap: 12px; line-height: 24px; }
.tight { letter-spacing: -.24px; }
.nyt { width: 24px; height: 24px; background: #002d72; font: bold 7px/7.500px "Liberation Sans", sans-serif; letter-spacing: -.3px; text-align: center; padding-top: 1px; }
.more { padding-left: 12px; font-size: 20px; }

/* page viewport */
.viewport { height: 845px; flex: none; display: flex; }
.site { width: 1895px; display: flex; flex-direction: column; }
.awsnav { height: 61px; flex: none; background: #232f3e; border-bottom: 1px solid #4a5564; display: flex; align-items: center; padding-left: 27px; color: #fff; }
.logo { width: 47px; height: 30px; display: flex; flex-direction: column; }
.logo span { font-size: 25px; font-weight: 600; line-height: 14px; height: 17px; margin-left: 1px; letter-spacing: -1.350px; }
.logo svg { margin-top: -1px; }
.vl { width: 1px; height: 34px; margin-left: 25px; background: #3f4b5b; }
.grid9 { width: 24px; height: 24px; margin-left: 25px; }
.navt { font-size: 18px; font-weight: 600; line-height: 23px; padding-bottom: 1px; white-space: nowrap; letter-spacing: -.42px; }
.grid9 + .navt { margin-left: 12px; width: 91px; }
.search { width: 810px; height: 45px; background: #16191f; border: 1px solid #879596; border-radius: 3px; display: flex; align-items: center; padding: 0 14px 2px 17px; font-size: 20.500px; color: #95a5a6; }
.search em { margin-left: 14px; letter-spacing: .1px; }
.search span { margin-left: auto; letter-spacing: .6px; }
.navicons { margin-left: auto; display: flex; }
.ni { height: 34px; display: flex; align-items: center; border-left: 1px solid #3f4b5b; }
.n1 { border: 0; width: 48px; }
.n2 { width: 76px; padding-left: 25px; }
.n3 { width: 73px; padding-left: 24px; }
.n4 { width: 74px; padding-left: 25px; }
.n5 { width: 160px; padding-left: 25px; }
.n6 { width: 190px; padding-left: 24px; }
.tri { margin-left: 9px; border: 6px solid transparent; border-top: 10px solid #fff; border-bottom: 0; }

.main { height: 737px; flex: none; display: flex; background: #f2f3f3; overflow: hidden; }
.left { width: 61px; background: #fff; border-right: 1px solid #c3c8c8; padding: 17px 0 0 19px; display: flex; flex-direction: column; gap: 6px; }
.left i { width: 21px; height: 3px; background: #545b64; }
.content { width: 1200px; margin-left: 35px; margin-right: 478px; }
.card { background: #fff; box-shadow: 0 1px 1px 0 rgba(0,28,36,.4), 1px 1px 1px 0 rgba(0,28,36,.2), -1px 1px 1px 0 rgba(0,28,36,.2); border-top: 1px solid #eaeded; }
.prev { height: 4px; border: 0; }
.scaling { margin-top: 24px; height: 545px; }
.net { margin-top: 24px; height: 300px; }
.chead { height: 96px; background: #fafafa; border-bottom: 1px solid #eaeded; padding: 16px 30px 0; }
.net .chead { height: 72px; padding-top: 17px; }
h2 { font-size: 26px; line-height: 33px; font-weight: 700; white-space: nowrap; letter-spacing: -.2px; }
.net h2 { letter-spacing: -.55px; }
a { color: #0073bb; font-size: 17px; font-weight: 700; letter-spacing: 0; }
h2 a { margin-left: 13px; }
.chead p { font-size: 17.500px; line-height: 27px; margin-top: -1px; color: #545b64; white-space: nowrap; }
.cbody { padding: 19px 30px 0; }
.label { font-size: 20px; line-height: 30px; letter-spacing: .12px; }
.tiles { display: flex; gap: 24px; margin-top: 8px; }
.tile { width: 364px; height: 137px; border: 1px solid #545b64; border-radius: 2px; padding: 13px 0 0 18px; display: flex; gap: 12px; white-space: nowrap; }
.tile.sel { border-color: #0073bb; background: #f1faff; }
.radio { width: 21px; height: 21px; margin-top: 5px; box-shadow: inset 0 0 0 1.500px #687078; border-radius: 50%; background: #fff; }
.sel .radio { border: 7px solid #0073bb; box-shadow: none; }
h4 { font-size: 20px; line-height: 30px; letter-spacing: .22px; }
.tile p { font-size: 17.500px; line-height: 24px; color: #687078; padding-top: 1px; }
h3 { font-size: 23px; font-weight: 700; line-height: 30px; margin-top: 29px; letter-spacing: -.2px; }
.lead { font-size: 20.400px; line-height: 33px; margin-top: 12px; white-space: nowrap; }
.table { margin-top: 17px; border-top: 1px solid #eaeded; box-shadow: 0 1px 1px 0 rgba(0,28,36,.4), 1px 1px 1px 0 rgba(0,28,36,.2), -1px 1px 1px 0 rgba(0,28,36,.2); font-size: 20px; white-space: nowrap; }
.tr { display: grid; grid-template-columns: 140px 225px 370px 405px; }
.th { height: 47px; background: #fafafa; border-bottom: 1px solid #eaeded; color: #545b64; font-weight: 700; letter-spacing: -.2px; line-height: 30px; padding-top: 8px; }
.th > div { border-right: 1px solid #eaeded; height: 30px; padding-left: 24px; }
.th > div:first-child, .td > div:first-child { padding-left: 30px; }
.th > div:first-child { letter-spacing: -.6px; }
.th > div:last-child { border: 0; letter-spacing: -.1px; }
.td { height: 61px; line-height: 30px; padding-top: 15px; }
.td > div { padding-left: 23px; }
.td > div:nth-child(2) { letter-spacing: .2px; }
.td > div:nth-child(3) { margin-top: -3px; padding-left: 23px; }
.input { display: block; width: 321px; height: 42px; border: 1px solid #545b64; border-radius: 2px; line-height: 40px; padding-left: 11px; }
.check { display: block; width: 21px; height: 21px; margin-top: 8px; margin-left: -1px; box-shadow: inset 0 0 0 1.500px #687078; border-radius: 3px; }
.net .cbody { padding-top: 18px; }
.vpc { display: flex; line-height: 30px; font-size: 20.500px; letter-spacing: .23px; }
.vpc span { border-right: 1px solid #eaeded; height: 26px; padding-right: 12px; line-height: 30px; }
.vpc a { margin-left: 12px; line-height: 32px; }
.controls { display: flex; gap: 24px; margin-top: 8px; }
.controls i { height: 48px; border: 1px solid #545b64; border-radius: 2px; }
.c1 { width: 558px; }
.c2 { width: 136px; }
.c3 { width: 205px; padding: 8px 0 0 157px; }
.right { background: #fff; border-left: 1px solid #c3c8c8; }
.r1 { width: 60px; padding: 16px 0 0 24px; }
.r2 { width: 61px; padding: 15px 0 0 18px; }

.awsfoot { height: 46px; flex: none; background: #232f3e; border-top: 1px solid #4a5564; display: flex; align-items: center; padding-left: 24px; color: #fff; font-size: 17.500px; white-space: nowrap; font-weight: 500; }
.f1 { margin-left: 8px; width: 125px; letter-spacing: .15px; }
.f2 { width: 896px; }
.f3 { width: 456px; letter-spacing: .05px; }
.f4 { width: 96px; }
.f5 { width: 88px; letter-spacing: -.2px; }
.f6 { letter-spacing: -.2px; }

.scrollbar { width: 25px; background: #f1f1f1; padding: 10px 0 10px 2px; display: flex; flex-direction: column; }
.up, .down { margin-left: 5px; width: 12px; border: 6px solid transparent; }
.up { border-bottom-color: #505050; border-top: 0; }
.down { border-top-color: #505050; border-bottom: 0; margin-top: auto; }
.thumb { width: 21px; height: 70px; margin-top: 227px; background: #c1c1c1; }

/* taskbar */
.taskbar { height: 71px; flex: none; background: #202020; border-top: 2px solid #444341; display: flex; color: #fff; font-size: 17px; }
.weather { width: 210px; padding: 17px 0 0 18px; position: relative; }
.deg { position: absolute; left: 28px; top: 7px; width: 35px; height: 25px; border-radius: 12px; background: #333; text-align: center; line-height: 24px; }
.apps { display: flex; width: 1190px; }
.app { width: 66px; height: 69px; padding-bottom: 2px; display: flex; align-items: center; justify-content: center; position: relative; }
.app.start { width: 68px; padding-right: 2px; }
.app.run::after { content: ""; position: absolute; left: 29px; top: 57px; width: 9px; height: 5px; border-radius: 3px; background: #9a9a9a; }
.app.act::before { content: ""; position: absolute; left: 3px; top: 3px; width: 53px; height: 60px; background: #2f2f2f; border: 1px solid #3a3a3a; border-radius: 6px; }
.app.act::after { content: ""; position: absolute; left: 21px; top: 57px; width: 24px; height: 5px; border-radius: 3px; background: #4cc2ff; }
.stack { position: absolute; left: 43px; top: 3px; width: 20px; height: 60px; background: #2a2a2a; border: 1px solid #363636; border-radius: 6px; }
.act svg { position: relative; }
.bdg { position: absolute; font-weight: 400; text-align: center; }
.k, .kg, .ny { left: 35px; top: 8px; width: 24px; height: 24px; border-radius: 50%; font-size: 14px; line-height: 24px; }
.k { background: #5a67bd; color: #ccd0f0; }
.kg { background: #0e8577; }
.ny { background: #f2a90c; color: #4a3508; font: bold 7px/7px "Liberation Sans", sans-serif; padding-top: 2px; letter-spacing: -.3px; }
.n99 { left: 26px; top: 8px; width: 41px; height: 24px; border-radius: 12px; background: #4cc2ff; color: #000; line-height: 24px; }
.ms { font: bold 15px "Open Sans", sans-serif; fill: #fff; }
.tray { display: flex; align-items: center; padding: 0 0 2px 35px; line-height: 24px; }
.t2 { margin-left: 27px; }
.t3 { margin-left: 24px; }
.lang { width: 54px; margin-left: 18px; text-align: center; }
.t4 { margin-left: 18px; }
.t5 { margin-left: 12px; }
.t6 { margin-left: 11px; }
.clock { width: 118px; text-align: right; font-size: 17.500px; letter-spacing: -.2px; }
.clock span { letter-spacing: .2px; }
.t7 { margin-left: 13px; }
```
